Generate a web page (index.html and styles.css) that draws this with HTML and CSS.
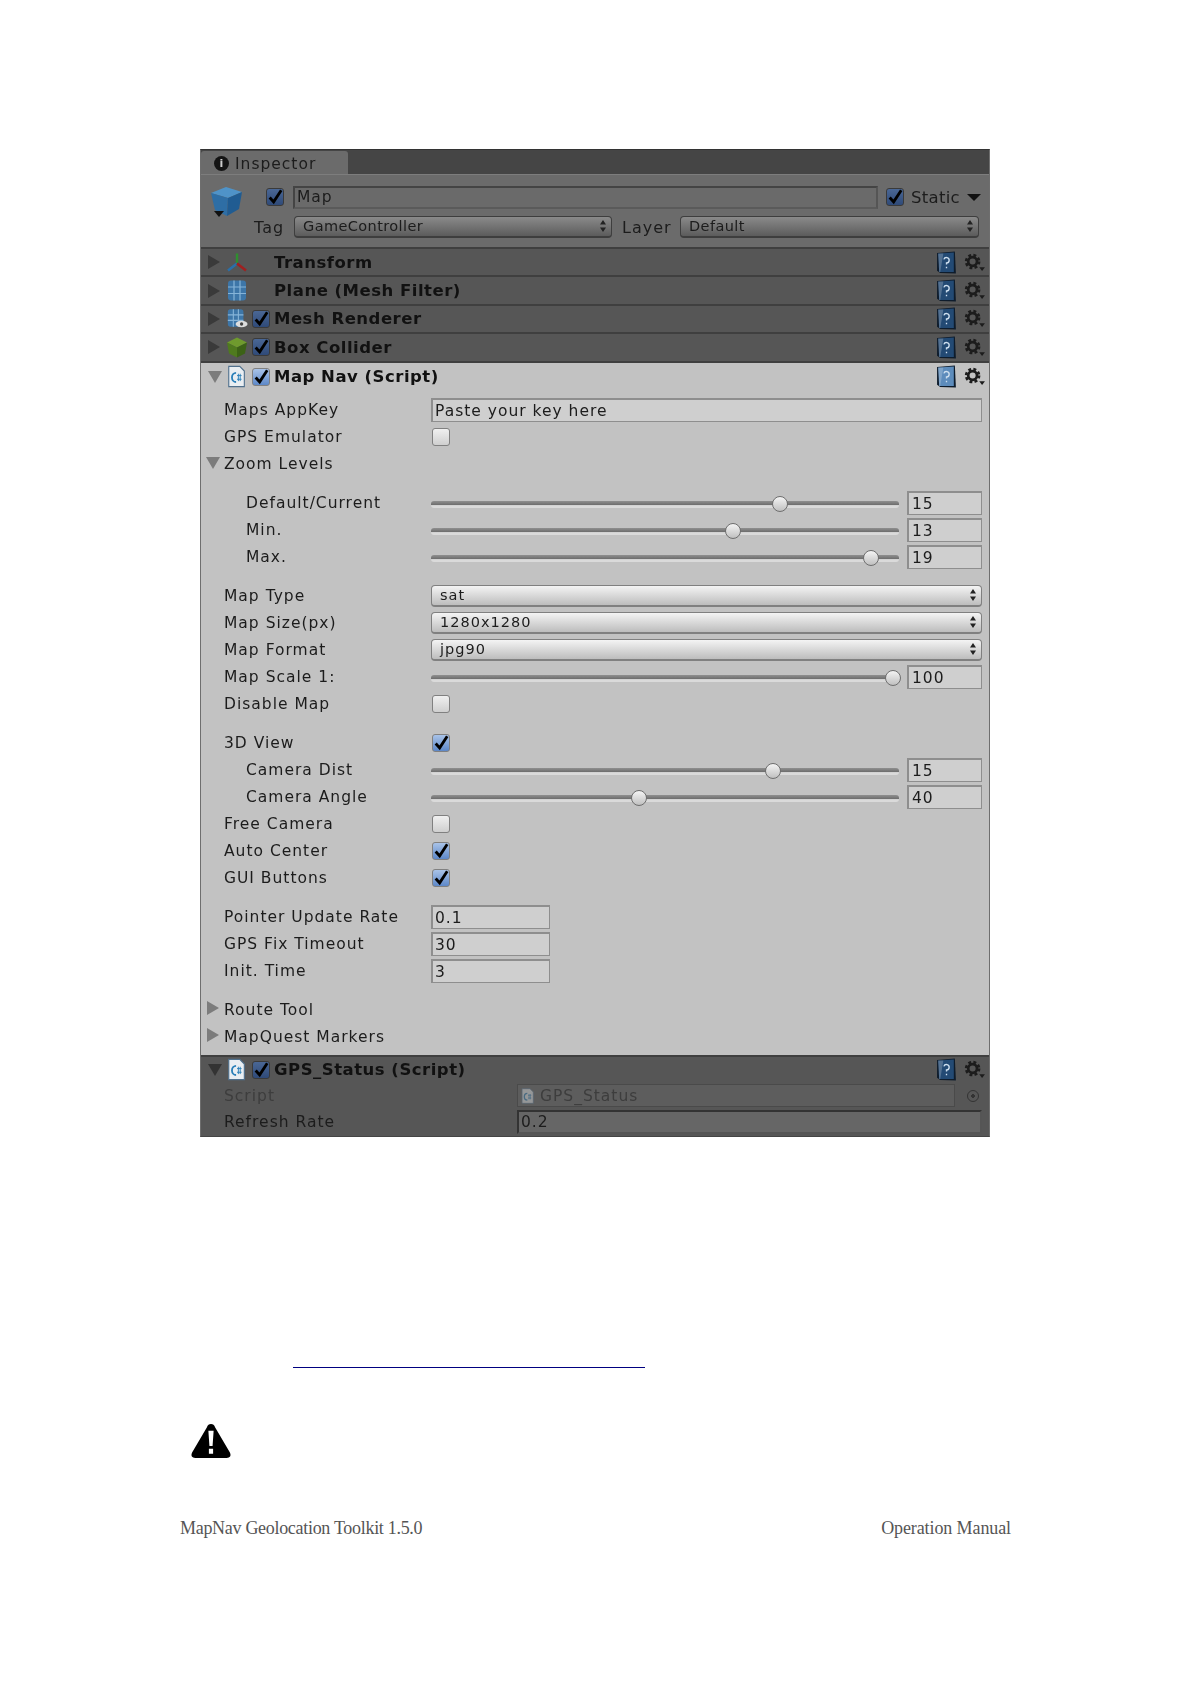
FILE: index.html
```html
<!DOCTYPE html>
<html>
	<head>
		<meta charset="utf-8" />
		<title>MapNav Geolocation Toolkit - Operation Manual</title>
		<link rel="stylesheet" href="styles.css">
	</head>
	<body>
		<!-- icons -->
		<svg class="defs" width="0" height="0">
			<symbol id="tick" viewBox="0 0 18 18"><path d="M3 9.500 L7.500 14.500 L16 1.500" fill="none" stroke="#000" stroke-width="3.200"/></symbol>
			<symbol id="cube" viewBox="0 0 33 33">
				<path d="M1 8 L16 2 L32 7 L18 13 Z" fill="#4f93c8"/>
				<path d="M1 8 L18 13 L17 31 L5 25 Z" fill="#2e6ea5"/>
				<path d="M18 13 L32 7 L29 24 L17 31 Z" fill="#205c92"/>
				<path d="M4 26 L14 26 L9 32 Z" fill="#111"/>
			</symbol>
			<symbol id="axes" viewBox="0 0 22 22">
				<path d="M11 12 V2" stroke="#2f8f2f" stroke-width="2.400"/>
				<path d="M11 12 L2 19" stroke="#2a6fa8" stroke-width="2.600"/>
				<path d="M11 12 L20 19" stroke="#a02020" stroke-width="2.600"/>
			</symbol>
			<symbol id="mesh" viewBox="0 0 22 22">
				<rect x="2" y="1" width="18" height="20" rx="3" fill="#3d76a8"/>
				<path d="M2 7.500 H20 M2 14 H20 M8 1 V21 M14 1 V21" stroke="#86b4d8" stroke-width="1.200"/>
			</symbol>
			<symbol id="meshr" viewBox="0 0 24 22">
				<rect x="2" y="1" width="17" height="19" rx="3" fill="#3d76a8"/>
				<path d="M2 7 H19 M2 13 H19 M8 1 V20 M13.500 1 V20" stroke="#86b4d8" stroke-width="1.200"/>
				<ellipse cx="17" cy="17" rx="6.500" ry="3.500" fill="#ddd"/>
				<circle cx="17" cy="17" r="1.800" fill="#444"/>
			</symbol>
			<symbol id="box" viewBox="0 0 22 22">
				<path d="M1 6 L11 1 L21 6 L11 11 Z" fill="#6f9a2e"/>
				<path d="M1 6 L11 11 V21 L3 17 Z" fill="#4f7a1e"/>
				<path d="M21 6 L11 11 V21 L19 17 Z" fill="#3c6216"/>
			</symbol>
			<symbol id="script" viewBox="0 0 24 24">
				<path d="M3 1 H15 L20 6 V23 H3 Z" fill="#e9eef2" stroke="#50708c" stroke-width="1.200"/>
				<path d="M11 8 A4.500 5 0 1 0 11 18" fill="none" stroke="#2a7fb8" stroke-width="2"/>
				<path d="M12 11 H17 M12 15 H17 M13.500 9 V17 M15.500 9 V17" stroke="#2a7fb8" stroke-width="1"/>
			</symbol>
			<symbol id="help" viewBox="0 0 20 22">
				<path d="M1 2 L18 0.500 L19 21.500 L4 21 L1 19 Z" fill="#0e1c2c"/>
				<path d="M2 2.500 L17 1.500 V20 H3 Z" fill="currentColor"/>
				<path d="M2 2.500 H7 L4 20 H3 Z" fill="#fff" opacity="0.22"/>
				<path d="M7.500 8 A2.600 2.600 0 1 1 10 11.500 V13 M10 15 V16.500" fill="none" stroke="#cfe0f0" stroke-width="1.300"/>
			</symbol>
			<symbol id="gear" viewBox="0 0 22 20">
				<circle cx="9" cy="9" r="4.600" fill="none" stroke="#1c1c1c" stroke-width="2.800"/>
				<circle cx="9" cy="9" r="6.800" fill="none" stroke="#1c1c1c" stroke-width="2.800" stroke-dasharray="3 2.340"/>
				<path d="M16 15 H22 L19 19 Z" fill="#1c1c1c"/>
			</symbol>
			<symbol id="updown" viewBox="0 0 8 14">
				<path d="M4 1 L7 5.500 H1 Z M4 13 L7 8.500 H1 Z" fill="#222"/>
			</symbol>
		</svg>

		<div class="panel">
			<!-- tab strip -->
			<div class="tabs">
				<div class="tab"><span class="info-dot">i</span>Inspector</div>
			</div>

			<!-- object header -->
			<div class="object">
				<div class="object-line">
					<svg class="cube"><use href="#cube"/></svg>
					<span class="check dark"><svg><use href="#tick"/></svg></span>
					<div class="field name-field">Map</div>
					<span class="check dark"><svg><use href="#tick"/></svg></span>
					<span class="static-label">Static</span>
					<span class="static-arrow"></span>
				</div>
				<div class="object-line second">
					<span class="tag-label">Tag</span>
					<div class="popup dark tag-popup">GameController<svg><use href="#updown"/></svg></div>
					<span class="layer-label">Layer</span>
					<div class="popup dark layer-popup">Default<svg><use href="#updown"/></svg></div>
				</div>
			</div>

			<!-- collapsed components -->
			<div class="comp">
				<span class="tri right"></span>
				<svg class="comp-icon"><use href="#axes"/></svg>
				<span class="check none"></span>
				<span class="comp-title">Transform</span>
				<svg class="help"><use href="#help"/></svg>
				<svg class="gear"><use href="#gear"/></svg>
			</div>
			<div class="comp">
				<span class="tri right"></span>
				<svg class="comp-icon"><use href="#mesh"/></svg>
				<span class="check none"></span>
				<span class="comp-title">Plane (Mesh Filter)</span>
				<svg class="help"><use href="#help"/></svg>
				<svg class="gear"><use href="#gear"/></svg>
			</div>
			<div class="comp">
				<span class="tri right"></span>
				<svg class="comp-icon"><use href="#meshr"/></svg>
				<span class="check dark"><svg><use href="#tick"/></svg></span>
				<span class="comp-title">Mesh Renderer</span>
				<svg class="help"><use href="#help"/></svg>
				<svg class="gear"><use href="#gear"/></svg>
			</div>
			<div class="comp">
				<span class="tri right"></span>
				<svg class="comp-icon"><use href="#box"/></svg>
				<span class="check dark"><svg><use href="#tick"/></svg></span>
				<span class="comp-title">Box Collider</span>
				<svg class="help"><use href="#help"/></svg>
				<svg class="gear"><use href="#gear"/></svg>
			</div>

			<!-- Map Nav, selected -->
			<div class="mapnav">
				<div class="comp light">
					<span class="tri down"></span>
					<svg class="comp-icon"><use href="#script"/></svg>
					<span class="check on"><svg><use href="#tick"/></svg></span>
					<span class="comp-title">Map Nav (Script)</span>
					<svg class="help"><use href="#help"/></svg>
					<svg class="gear"><use href="#gear"/></svg>
				</div>

				<div class="group">
					<div class="row">
						<span class="label">Maps AppKey</span>
						<div class="field text-field">Paste your key here</div>
					</div>
					<div class="row">
						<span class="label">GPS Emulator</span>
						<span class="check off"></span>
					</div>
					<div class="row">
						<span class="label"><span class="tri down inline"></span>Zoom Levels</span>
					</div>
				</div>

				<div class="group">
					<div class="row">
						<span class="label sub">Default/Current</span>
						<div class="slider"><div class="track"><span class="knob" style="left: 74.6%"></span></div><div class="field num">15</div></div>
					</div>
					<div class="row">
						<span class="label sub">Min.</span>
						<div class="slider"><div class="track"><span class="knob" style="left: 64.6%"></span></div><div class="field num">13</div></div>
					</div>
					<div class="row">
						<span class="label sub">Max.</span>
						<div class="slider"><div class="track"><span class="knob" style="left: 94%"></span></div><div class="field num">19</div></div>
					</div>
				</div>

				<div class="group">
					<div class="row">
						<span class="label">Map Type</span>
						<div class="popup">sat<svg><use href="#updown"/></svg></div>
					</div>
					<div class="row">
						<span class="label">Map Size(px)</span>
						<div class="popup">1280x1280<svg><use href="#updown"/></svg></div>
					</div>
					<div class="row">
						<span class="label">Map Format</span>
						<div class="popup">jpg90<svg><use href="#updown"/></svg></div>
					</div>
					<div class="row">
						<span class="label">Map Scale 1:</span>
						<div class="slider"><div class="track"><span class="knob" style="left: 98.8%"></span></div><div class="field num">100</div></div>
					</div>
					<div class="row">
						<span class="label">Disable Map</span>
						<span class="check off"></span>
					</div>
				</div>

				<div class="group">
					<div class="row">
						<span class="label">3D View</span>
						<span class="check on"><svg><use href="#tick"/></svg></span>
					</div>
					<div class="row">
						<span class="label sub">Camera Dist</span>
						<div class="slider"><div class="track"><span class="knob" style="left: 73%"></span></div><div class="field num">15</div></div>
					</div>
					<div class="row">
						<span class="label sub">Camera Angle</span>
						<div class="slider"><div class="track"><span class="knob" style="left: 44.4%"></span></div><div class="field num">40</div></div>
					</div>
					<div class="row">
						<span class="label">Free Camera</span>
						<span class="check off"></span>
					</div>
					<div class="row">
						<span class="label">Auto Center</span>
						<span class="check on"><svg><use href="#tick"/></svg></span>
					</div>
					<div class="row">
						<span class="label">GUI Buttons</span>
						<span class="check on"><svg><use href="#tick"/></svg></span>
					</div>
				</div>

				<div class="group">
					<div class="row">
						<span class="label">Pointer Update Rate</span>
						<div class="field text-field small">0.1</div>
					</div>
					<div class="row">
						<span class="label">GPS Fix Timeout</span>
						<div class="field text-field small">30</div>
					</div>
					<div class="row">
						<span class="label">Init. Time</span>
						<div class="field text-field small">3</div>
					</div>
				</div>

				<div class="group">
					<div class="row">
						<span class="label"><span class="tri right inline"></span>Route Tool</span>
					</div>
					<div class="row">
						<span class="label"><span class="tri right inline"></span>MapQuest Markers</span>
					</div>
				</div>
			</div>

			<!-- GPS status -->
			<div class="gps">
				<div class="comp plain">
					<span class="tri down"></span>
					<svg class="comp-icon"><use href="#script"/></svg>
					<span class="check dark"><svg><use href="#tick"/></svg></span>
					<span class="comp-title">GPS_Status (Script)</span>
					<svg class="help"><use href="#help"/></svg>
					<svg class="gear"><use href="#gear"/></svg>
				</div>
				<div class="gps-row">
					<span class="gps-label dim">Script</span>
					<div class="field script-field"><svg class="mini"><use href="#script"/></svg>GPS_Status</div>
					<span class="target"></span>
				</div>
				<div class="gps-row">
					<span class="gps-label">Refresh Rate</span>
					<div class="field rate-field">0.2</div>
				</div>
			</div>
		</div>

		<div class="link-line"></div>

		<svg class="warning" viewBox="0 0 40 32" preserveAspectRatio="none">
			<path d="M20 1 C22 1 23 2 24 4 L38 27 C39.500 30 38 32 35 32 H5 C2 32 0.500 30 2 27 L16 4 C17 2 18 1 20 1 Z" fill="#000"/>
			<path d="M17.500 7 H22.500 L21.500 21 H18.500 Z M18 23.500 H22 V28 H18 Z" fill="#fff"/>
		</svg>

		<div class="footer">
			<span class="foot-left">MapNav Geolocation Toolkit 1.5.0</span>
			<span class="foot-right">Operation Manual</span>
		</div>
	</body>
</html>
```

FILE: styles.css
```css
html,
body
{
	margin: 0;
	padding: 0;
	background: #fff;
}
body
{
	height: 1684px;
	overflow: hidden;
}
.defs
{
	position: absolute;
}
.panel
{
	box-sizing: border-box;
	width: 790px;
	height: 988px;
	margin: 149px 200px 0;
	display: flex;
	flex-direction: column;
	border: 1px solid #6e6e6e;
	border-top-color: #333;
	border-bottom-color: #444;
	font-family: "DejaVu Sans", sans-serif;
	font-size: 15.5px;
	letter-spacing: 1px;
	color: #1c1c1c;
	background: #c2c2c2;
	filter: blur(0.7px);
}
/* tab strip */
.tabs
{
	height: 24px;
	flex: none;
	background: #454545;
	display: flex;
	align-items: flex-end;
}
.tab
{
	width: 147px;
	height: 23px;
	box-sizing: border-box;
	padding: 2px 0 0 13px;
	background: #6b6b6b;
	border-radius: 3px 3px 0 0;
	display: flex;
	align-items: center;
	gap: 6px;
}
.info-dot
{
	width: 15px;
	height: 15px;
	border-radius: 50%;
	background: #141414;
	color: #ccc;
	font-size: 11px;
	font-weight: bold;
	letter-spacing: 0;
	text-align: center;
	line-height: 15px;
}
/* object header */
.object
{
	height: 73px;
	flex: none;
	box-sizing: border-box;
	padding: 10px 10px 0 9px;
	background: #6b6b6b;
	border-top: 1px solid #7d7d7d;
}
.object-line
{
	display: flex;
	align-items: center;
	height: 24px;
}
.object-line.second
{
	margin-top: 7px;
	padding-left: 44px;
	height: 22px;
}
.cube
{
	width: 33px;
	height: 33px;
	margin: 8px 23px 0 0;
	flex: none;
}
.name-field
{
	width: 585px;
	height: 23px;
	margin: 0 8px 0 9px;
	background: #6a6a6a;
	border: 2px solid #444;
	border-right-color: #555;
	border-bottom-color: #5a5a5a;
	flex: none;
	min-width: 585px;
	padding-right: 0;
}
.static-label
{
	margin-left: 7px;
	font-size: 16.5px;
	letter-spacing: 0.3px;
}
.static-arrow
{
	margin-left: 7px;
	border-left: 7px solid transparent;
	border-right: 7px solid transparent;
	border-top: 7px solid #111;
}
.tag-label
{
	width: 40px;
	font-size: 16px;
}
.layer-label
{
	width: 58px;
	margin-left: 10px;
	font-size: 16px;
}
/* checkboxes */
.check
{
	box-sizing: border-box;
	display: inline-block;
	width: 18px;
	height: 18px;
	flex: none;
	border-radius: 3px;
	border: 1px solid #808080;
	background: linear-gradient(#f0f0f0, #cfcfcf);
}
.check svg
{
	display: block;
	width: 16px;
	height: 16px;
}
.check.on
{
	background: linear-gradient(#a9c3e8, #5d88c8);
}
.check.dark
{
	background: linear-gradient(#4a6795, #2f4a78);
	border-color: #3a3a3a;
}
.check.none
{
	visibility: hidden;
}
/* component title bars */
.comp
{
	height: 28.4px;
	flex: none;
	box-sizing: border-box;
	padding: 0 4px 0 7px;
	display: flex;
	align-items: center;
	background: #565656;
	border-top: 2px solid #3f3f3f;
}
.comp.light
{
	height: 30px;
	background: #c2c2c2;
	color: #1c1c1c;
}
.comp.plain
{
	height: 26px;
	border-top: 0;
	background: transparent;
}
.tri
{
	width: 0;
	height: 0;
	flex: none;
}
.tri.right
{
	margin-right: 6px;
	border-top: 7px solid transparent;
	border-bottom: 7px solid transparent;
	border-left: 12px solid #3a3a3a;
}
.tri.down
{
	margin-right: 4px;
	border-left: 7px solid transparent;
	border-right: 7px solid transparent;
	border-top: 12px solid #7c7c7c;
}
.gps .tri.down
{
	border-top-color: #333;
}
.tri.inline
{
	display: inline-block;
	margin-left: -18px;
	margin-right: 4px;
	border-top-color: #7c7c7c;
}
.tri.right.inline
{
	margin-left: -17px;
	margin-right: 5px;
	border-top-color: transparent;
	border-left-color: #7c7c7c;
}
.comp-icon
{
	width: 22px;
	height: 23px;
	flex: none;
}
.comp .check
{
	margin: 0 4px 0 4px;
}
.comp-title
{
	flex: 1;
	font-weight: bold;
	font-size: 16.5px;
	letter-spacing: 0.5px;
	color: #111;
}
.help
{
	width: 21px;
	height: 23px;
	flex: none;
	margin-right: -1px;
	color: #234a74;
}
.light .help
{
	color: #5d8cbc;
}
.gear
{
	width: 21px;
	height: 19px;
	margin-left: 8px;
	flex: none;
}
/* property rows */
.group
{
	margin-top: 12px;
}
.mapnav
{
	padding-bottom: 4px;
	flex: none;
}
.mapnav .comp + .group
{
	margin-top: 6px;
}
.row
{
	height: 27px;
	box-sizing: border-box;
	display: flex;
	align-items: center;
	padding: 0 7px 0 23px;
}
.label
{
	width: 207px;
	flex: none;
	white-space: nowrap;
}
.label.sub
{
	padding-left: 22px;
	box-sizing: border-box;
}
.row .check
{
	margin-left: 1px;
}
.field
{
	box-sizing: border-box;
	padding-left: 2px;
	white-space: nowrap;
	display: flex;
	align-items: center;
}
.text-field
{
	flex: 1;
	height: 24px;
	background: #cfcfcf;
	border: 2px solid #8e8e8e;
	border-bottom-width: 1px;
	border-right-width: 1px;
}
.text-field.small
{
	flex: none;
	width: 119px;
}
.slider
{
	flex: 1;
	display: flex;
	align-items: center;
	gap: 8px;
}
.track
{
	flex: 1;
	height: 7px;
	position: relative;
	top: 1px;
	border-radius: 3px;
	background: linear-gradient(#8f8f8f, #6e6e6e 55%, #dadada 65%);
}
.knob
{
	position: absolute;
	top: -5px;
	width: 16px;
	height: 16px;
	margin-left: -8px;
	box-sizing: border-box;
	border-radius: 50%;
	border: 1px solid #6e6e6e;
	background: linear-gradient(#f4f4f4, #c0c0c0);
}
.num
{
	width: 75px;
	height: 24px;
	flex: none;
	padding-left: 3px;
	background: #cfcfcf;
	border: 2px solid #8e8e8e;
	border-bottom-width: 1px;
	border-right-width: 1px;
}
/* popup buttons */
.popup
{
	flex: 1;
	height: 22px;
	box-sizing: border-box;
	padding: 0 4px 1px 8px;
	margin-top: -1px;
	display: flex;
	align-items: center;
	justify-content: space-between;
	font-size: 14.5px;
	border: 1px solid #808080;
	border-bottom-width: 2px;
	border-radius: 4px;
	background: linear-gradient(#f4f4f4, #bdbdbd);
}
.popup.dark
{
	letter-spacing: 0.4px;
	margin-top: 0;
	border-color: #3e3e3e;
	background: linear-gradient(#8a8a8a, #5c5c5c);
}
.popup.tag-popup
{
	width: 318px;
	flex: none;
}
.popup svg
{
	width: 8px;
	height: 14px;
	flex: none;
}
/* last component */
.gps
{
	flex: 1;
	background: #565656;
	border-top: 2px solid #3f3f3f;
}
.gps-row
{
	display: flex;
	align-items: center;
	height: 26px;
	padding: 0 7px 0 23px;
}
.gps-label
{
	width: 293px;
	flex: none;
}
.gps-label.dim
{
	color: #3d3d3d;
}
.script-field
{
	width: 438px;
	height: 23px;
	color: #3d3d3d;
	background: #5d5d5d;
	border: 1px solid #4a4a4a;
}
.mini
{
	width: 16px;
	height: 18px;
	margin-right: 4px;
	opacity: 0.4;
}
.target
{
	width: 10px;
	height: 10px;
	margin-left: 12px;
	border: 1px solid #333;
	border-radius: 50%;
	background: radial-gradient(#333 25%, transparent 30%);
}
.rate-field
{
	flex: 1;
	height: 24px;
	background: #666;
	border: 2px solid #333;
	border-bottom-color: #555;
	border-right-color: #555;
}
/* rest of the manual page */
.link-line
{
	width: 352px;
	height: 1px;
	margin: 230px 0 0 293px;
	background: #000080;
}
.warning
{
	display: block;
	width: 42px;
	height: 35px;
	margin: 55px 0 0 190px;
}
.footer
{
	display: flex;
	justify-content: space-between;
	margin: 60px 179px 0 180px;
	font-family: "Liberation Serif", serif;
	font-size: 18px;
	color: #555;
}
.foot-left
{
	letter-spacing: -0.3px;
}
.foot-right
{
	letter-spacing: -0.1px;
}
```
